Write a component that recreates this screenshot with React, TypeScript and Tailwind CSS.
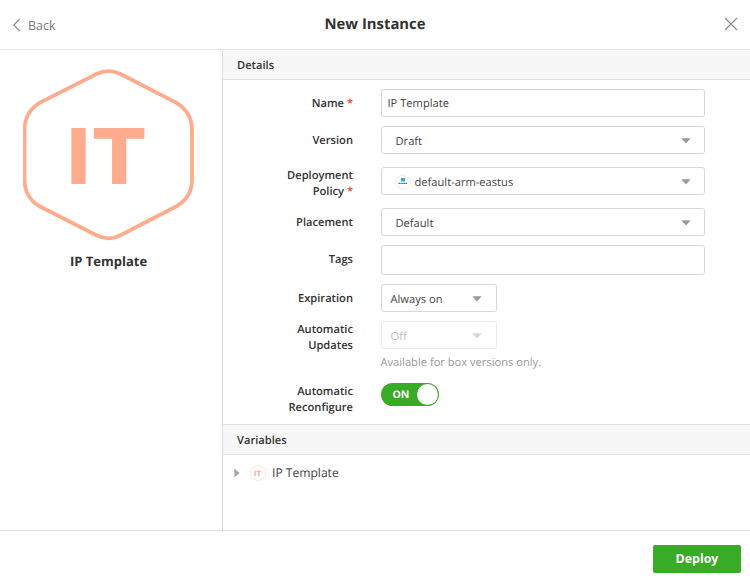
import React from "react";

function Caret({ light = false }: { light?: boolean }) {
  return (
    <svg width="10" height="6" viewBox="0 0 10 6" className="shrink-0">
      <path d="M0.3 0.2H9.7L5 5.6Z" fill={light ? "#d6d6d6" : "#999999"} />
    </svg>
  );
}

function Hexagon({ className }: { className: string }) {
  return (
    <svg viewBox="0 0 172 172" className={className}>
      <path
        d="M73.500 5Q85.500 -0.800 97.500 5L153.500 33.800Q169 43.300 169 60.800V110.800Q169 128.300 153.500 137.300L97.500 166.300Q85.500 172.300 73.500 166.300L16.500 137.300Q1.500 128.300 1.500 110.800V60.800Q1.500 43.300 16.500 33.800Z"
        fill="none"
        stroke="#ffac8e"
        strokeWidth="3.800"
      />
      <text transform="scale(1.07 1)" y="114.500" fontFamily="Inter, sans-serif" fontSize="77" fontWeight="800" fill="#ffac8e">
        <tspan x="41">I</tspan>
        <tspan x="63.800">T</tspan>
      </text>
    </svg>
  );
}

function Label({ children, required = false }: { children: React.ReactNode; required?: boolean }) {
  return (
    <div className="-mb-px w-[130px] shrink-0 pt-px text-right font-semibold leading-4 text-[#333333]">
      {children}
      {required && <span className="text-[#f0412f]"> *</span>}
    </div>
  );
}

function Select({ children, light = false, className = "" }: { children: React.ReactNode; light?: boolean; className?: string }) {
  return (
    <div className={`flex h-7 items-center justify-between rounded-[3px] border bg-white pt-px ${light ? "border-[#ebebeb] text-[#bbbbbb]" : "border-[#d6d6d6]"} ${className}`}>
      <span className="flex items-center gap-1 pt-[3px] leading-4">{children}</span>
      <Caret light={light} />
    </div>
  );
}

function Row({ children, className }: { children: React.ReactNode; className: string }) {
  return <div className={`flex items-center gap-[27.500px] ${className}`}>{children}</div>;
}

function SectionBar({ children }: { children: React.ReactNode }) {
  return <h2 className="flex h-[30px] items-center border-b border-[#e0e0e0] bg-[#f7f7f7] pt-[3px] pl-3.5 leading-4 font-semibold text-[#333333]">{children}</h2>;
}

export default function App() {
  return (
    <div className="flex h-[582px] w-[750px] flex-col overflow-hidden bg-white font-['Open_Sans',sans-serif] text-[11.150px] text-[#444444] [text-rendering:geometricPrecision]">
      <header className="grid h-[50px] shrink-0 grid-cols-3 items-center border-b border-[#e6e6e6] px-3">
        <button className="flex items-center gap-[7px] text-[12.500px] text-[#777777]">
          <svg width="9" height="14" viewBox="0 0 9 14" fill="none" stroke="#888888" strokeWidth="1.1">
            <path d="M7.800 1L1.800 7L7.800 13" />
          </svg>
          <span className="pt-[3px]">Back</span>
        </button>
        <h1 className="pb-px text-center text-[14.850px] font-bold text-[#333333]">New Instance</h1>
        <button className="justify-self-end pb-px">
          <svg width="14" height="14" viewBox="0 0 14 14" fill="none" stroke="#888888" strokeWidth="1.1">
            <path d="M1 1L13 13M13 1L1 13" />
          </svg>
        </button>
      </header>
      <main className="flex h-[480px] shrink-0">
        <aside className="flex w-[223px] shrink-0 flex-col items-center border-r border-[#dddddd] pt-[19px] pr-[5px]">
          <Hexagon className="h-[172px] w-[172px]" />
          <div className="mt-[11px] text-[13px] leading-[18px] font-bold text-[#333333]">IP Template</div>
        </aside>
        <section className="flex grow flex-col">
          <SectionBar>Details</SectionBar>
          <div className="flex h-[344px] shrink-0 flex-col pt-[9px]">
            <Row className="h-7">
              <Label required>Name</Label>
              <div className="flex h-7 w-[324px] items-center rounded-[3px] border border-[#d6d6d6] pt-0.5 pl-1.5 leading-4">IP Template</div>
            </Row>
            <Row className="mt-[9px] h-7">
              <Label>Version</Label>
              <Select className="w-[324px] pr-[13px] pl-3.5">Draft</Select>
            </Row>
            <Row className="mt-[13px] h-7">
              <div className="pt-[3px]"><Label required>Deployment<br />Policy</Label></div>
              <Select className="w-[324px] pr-[13px] pl-[13px]">
                <svg width="16" height="16" viewBox="0 0 16 16" className="-mt-0.5">
                  <path d="M7 1Q8 .5 9 1L14 3.500Q15 4 15 5.500V10.500Q15 12 14 12.500L9 15Q8 15.500 7 15L2 12.500Q1 12 1 10.500V5.500Q1 4 2 3.500Z" fill="#fff" stroke="#e0e5ea" strokeWidth=".8" />
                  <path d="M6 4H10V7.500H6Z" fill="#39a5e5" />
                  <path d="M3.500 9.300H12.500" stroke="#63717d" strokeWidth="1.300" strokeDasharray="1.500 .3" />
                </svg>
                default-arm-eastus
              </Select>
            </Row>
            <Row className="mt-[13px] h-7">
              <Label>Placement</Label>
              <Select className="w-[324px] pr-[13px] pl-3.5">Default</Select>
            </Row>
            <Row className="mt-[9px] h-[30px]">
              <div className="-mt-0.5"><Label>Tags</Label></div>
              <div className="h-[30px] w-[324px] rounded-[3px] border border-[#d6d6d6]" />
            </Row>
            <Row className="mt-[9px] h-7">
              <Label>Expiration</Label>
              <Select className="w-[116px] pr-3.5 pl-[9px]">Always on</Select>
            </Row>
            <div className="mt-[9px] flex h-[50px] items-start gap-[27.500px]">
              <Label>Automatic<br />Updates</Label>
              <div>
                <Select light className="w-[116px] pr-3.5 pl-[9px]">Off</Select>
                <div className="mt-1.5 leading-4 text-[#999999]">Available for box versions only.</div>
              </div>
            </div>
            <div className="mt-3 flex items-start gap-[27.500px]">
              <Label>Automatic<br />Reconfigure</Label>
              <div className="flex h-[23px] w-[58.500px] items-center justify-between rounded-full bg-[#39ab26] pr-px pl-3 text-[10.500px] font-bold text-white">
                <span className="pt-px leading-4">ON</span>
                <span className="h-[21px] w-[21px] rounded-full bg-white" />
              </div>
            </div>
          </div>
          <div className="border-t border-[#e0e0e0]">
            <SectionBar>Variables</SectionBar>
          </div>
          <div className="flex h-[35px] items-center pl-[11px] text-[12.100px]">
            <svg width="6" height="10" viewBox="0 0 6 10"><path d="M.3 .5V9.500L5.700 5Z" fill="#aaaaaa" /></svg>
            <Hexagon className="ml-2.5 h-4 w-4" />
            <span className="ml-1.5 pt-px">IP Template</span>
          </div>
        </section>
      </main>
      <footer className="flex grow items-center justify-end border-t border-[#e0e0e0] pt-1 pr-[9px]">
        <button className="h-7 w-[88px] rounded-[2px] bg-[#39ab26] pt-px text-[12.400px] font-bold text-white">Deploy</button>
      </footer>
    </div>
  );
}
